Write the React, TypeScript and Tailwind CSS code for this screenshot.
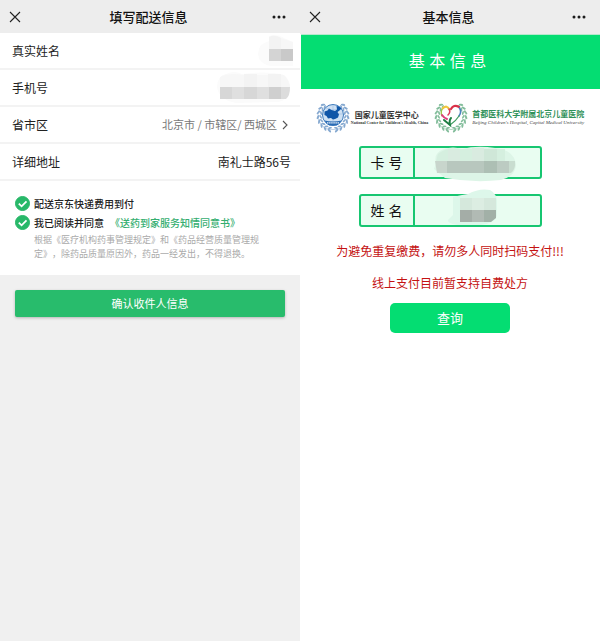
import type { ReactNode } from 'react';

const CJK = "font-['Noto_Sans_CJK_SC',sans-serif]";

function CloseIcon() {
  return (
    <svg viewBox="0 0 12 12" className="h-3 w-3" fill="none" stroke="#222" strokeWidth="1.1">
      <path d="M1 1l10 10M11 1L1 11" />
    </svg>
  );
}

function MoreIcon() {
  return (
    <svg viewBox="0 0 14 4" className="h-1 w-3.5" fill="#1c1c1c">
      <circle cx="2" cy="2" r="1.5" />
      <circle cx="7" cy="2" r="1.5" />
      <circle cx="12" cy="2" r="1.5" />
    </svg>
  );
}

function TitleBar({ title, className }: { title: string; className: string }) {
  return (
    <header className={`flex items-center justify-between bg-[#ededed] pr-3.5 pl-[9px] ${className}`}>
      <button type="button" aria-label="关闭" className="block w-4">
        <CloseIcon />
      </button>
      <h1 className="text-[13px] leading-5 font-medium text-[#111]">{title}</h1>
      <button type="button" aria-label="更多" className="block">
        <MoreIcon />
      </button>
    </header>
  );
}

function Row({ label, children }: { label: string; children: ReactNode }) {
  return (
    <div className="flex h-[37px] items-center justify-between border-b-2 border-[#f3f3f3] pr-[9px] pl-3 text-xs text-[#222]">
      <dt>{label}</dt>
      <dd>{children}</dd>
    </div>
  );
}

function NameMosaic() {
  return (
    <svg viewBox="0 0 38 34" className="-mr-1 h-[34px] w-[38px]">
      <path d="M12 2Q20-1 27 4L36 8V32H14Q2 30 1 20Q1 10 12 7Z" fill="#fbfbfb" />
      <path d="M12 3Q18 0 24 4V15H12Z" fill="#f3f3f3" />
      <path d="M24 4L36 8V15H24Z" fill="#f7f7f7" />
      <path d="M12 15h12v12H12z" fill="#d4d4d4" />
      <path d="M24 15h12v12H24z" fill="#c9c9c9" />
    </svg>
  );
}

function PhoneMosaic() {
  return (
    <svg viewBox="0 0 75 34" className="h-[34px] w-[75px]">
      <path d="M10 3Q18-1 26 3Q48 0 66 3Q75 8 74 19Q73 29 62 31L20 32Q3 29 1 16Q1 5 10 3Z" fill="#fbfbfb" />
      <path d="M4 6Q12 1 28 4H68Q73 9 74 16H4Z" fill="#f7f7f7" />
      <path d="M28 3h13v13H28zM52 3h13v13H52z" fill="#f3f3f3" />
      <path d="M4 16h12v12H4zM28 16h13v12H28z" fill="#d7d7d7" />
      <path d="M16 16h12v12H16zM41 16h12v12H41z" fill="#dfdfdf" />
      <path d="M53 16h12v12H53z" fill="#cfcfcf" />
      <path d="M65 16h9q0 9-4 12h-5z" fill="#dcdcdc" />
    </svg>
  );
}

function CheckItem({ label, children }: { label: string; children?: ReactNode }) {
  return (
    <div className="flex h-[19px] items-center gap-1.5 text-[#222]">
      <label className="flex items-center gap-1">
        <span className="relative block h-[15px] w-[15px]">
          <input
            type="checkbox"
            defaultChecked
            className="peer block h-[15px] w-[15px] appearance-none rounded-full border border-[#28b869] checked:bg-[#28b869]"
          />
          <svg
            viewBox="0 0 15 15"
            className="pointer-events-none absolute inset-0 hidden peer-checked:block"
            fill="none"
            stroke="#fff"
            strokeWidth="1.8"
          >
            <path d="M3.8 7.6l2.8 2.7 4.9-4.9" />
          </svg>
        </span>
        {label}
      </label>
      {children}
    </div>
  );
}

function DeliveryPanel() {
  return (
    <section className="flex flex-col bg-[#f0f0f0]">
      <TitleBar title="填写配送信息" className="h-[33px]" />
      <div className="bg-white pb-[14px]">
        <dl>
          <Row label="真实姓名">
            <NameMosaic />
          </Row>
          <Row label="手机号">
            <PhoneMosaic />
          </Row>
          <Row label="省市区">
            <button type="button" className="flex items-center gap-1 text-[11px] text-[#777]">
              北京市 / 市辖区/ 西城区
              <svg viewBox="0 0 8 10" className="mr-0.5 h-2.5 w-2" fill="none" stroke="#555" strokeWidth="1.1">
                <path d="M2 1l4 4-4 4" />
              </svg>
            </button>
          </Row>
          <Row label="详细地址">南礼士路56号</Row>
        </dl>
        <div className="px-[15px] pt-[13px] text-[10px] font-medium">
          <CheckItem label="配送京东快递费用到付" />
          <CheckItem label="我已阅读并同意">
            <a href="#" className="text-[#35ae70]">
              《送药到家服务知情同意书》
            </a>
          </CheckItem>
          <p className="mt-px pr-5 pl-[19px] text-[9px] leading-[14px] font-normal text-[#aaa] [text-spacing-trim:space-all]">
            根据《医疗机构药事管理规定》和《药品经营质量管理规定》，除药品质量原因外，药品一经发出，不得退换。
          </p>
        </div>
      </div>
      <div className="px-[15px] pt-[15px]">
        <button
          type="button"
          className="block h-[27px] w-full rounded-[2px] bg-[#28bc6c] text-[11px] text-white shadow-[0_1px_3px_rgba(0,0,0,0.25)]"
        >
          确认收件人信息
        </button>
      </div>
    </section>
  );
}

const LEAF_ANGLES = [14, 32, 50, 68, 86, 104, 122, 138];

function Wreath({ color }: { color: string }) {
  return (
    <g fill={color} stroke={color}>
      <path d="M17 28.5A14 14 0 0 1 5 6M17 28.5A14 14 0 0 0 29 6" fill="none" strokeWidth="0.5" />
      {LEAF_ANGLES.map((a) => (
        <g key={a} stroke="none">
          <g transform={`rotate(${a} 17 15)`}>
            <ellipse cx="17" cy="30" rx="2.3" ry="1" transform="rotate(32 17 30)" />
            <ellipse cx="17" cy="27.3" rx="2" ry="0.9" transform="rotate(-28 17 27.3)" />
          </g>
          <g transform={`rotate(${-a} 17 15)`}>
            <ellipse cx="17" cy="30" rx="2.3" ry="1" transform="rotate(-32 17 30)" />
            <ellipse cx="17" cy="27.3" rx="2" ry="0.9" transform="rotate(28 17 27.3)" />
          </g>
        </g>
      ))}
    </g>
  );
}

function CenterLogo() {
  return (
    <svg viewBox="0 0 34 32" className="h-8 w-[34px]">
      <Wreath color="#86a9d0" />
      <circle cx="17" cy="14" r="10.5" fill="#cfe1f3" stroke="#3f7cbd" strokeWidth="1" />
      <path d="M7 13h20M17 4v20M10 7q7 4 14 0" fill="none" stroke="#8db3dc" strokeWidth="0.5" />
      <path
        d="M8.5 10.5l3-1 1.5-2 2.5 1.5 3.5 1 2-1.5-.5-3.5 2.5.5 2.5 2-2 2-2 1.5 1.5 2.5-1 3-3 1.5-2 .5-2-1.5-3 .5-1.5-2.5-2-1z"
        fill="#0f56a8"
      />
      <path d="M8.5 19.5q8.5 2 17 0-2 4-5 5h-7q-3-1-5-5z" fill="#2b6cb5" />
      <path d="M11 21.8h12" stroke="#e6f0fa" strokeWidth="1.2" strokeDasharray="1.5 0.6" />
    </svg>
  );
}

function HospitalLogo() {
  return (
    <svg viewBox="0 0 34 32" className="h-8 w-[34px]" fill="none" strokeLinecap="round">
      <Wreath color="#83bd9b" />
      <path
        d="M16 24Q7 19 7 12Q7 5 12 5Q15 5 17 8Q20 4 24 5Q28 8 26 14Q23 20 16 24Z"
        fill="#fff"
        stroke="none"
      />
      <path d="M8 15Q6 10 9 7" stroke="#9cc64a" strokeWidth="1.4" />
      <path d="M9 7Q13 4 15 8" stroke="#f0c63c" strokeWidth="2.2" />
      <path d="M15 8Q17 11 14 14" stroke="#dc3c5c" strokeWidth="1.5" />
      <path d="M8 14Q10 17 13 18" stroke="#dd3f7c" strokeWidth="2" />
      <path d="M17 8Q20 3 25 6" stroke="#da3148" strokeWidth="2.2" />
      <path d="M25.5 7Q28 11 25 15" stroke="#4d82c0" strokeWidth="1.6" />
      <path d="M25 15Q22 20 16 24" stroke="#3f9e61" strokeWidth="1.2" />
      <path d="M10 19L16 24Q15 19 17 17" stroke="#1e7d43" strokeWidth="2" />
    </svg>
  );
}

function CardMosaic() {
  return (
    <svg viewBox="0 0 84 36" className="absolute -top-0.5 left-[18px] h-9 w-[84px]">
      <path d="M11 3Q20 0 29 3Q44-1 62 2Q82 4 83 20Q81 31 68 34Q40 37 12 32L1 23Q2 20 3 17Q0 7 11 3Z" fill="#ddf5e7" />
      <path d="M5 8Q14 1 26 3H72V15H3Z" fill="#d5efdf" />
      <path d="M15 4h12v11H15zM39 2h12v13H39z" fill="#d9ebe0" />
      <path d="M51 3h13v12H51z" fill="#cfe7d8" />
      <path d="M2 15h12v12H4z" fill="#c8d5cc" />
      <path d="M14 15h37v12H14z" fill="#b8c7be" />
      <path d="M51 15h13v12H51z" fill="#adbfb4" />
      <path d="M64 15h12v12H64z" fill="#bccbc2" />
      <path d="M76 15h6q1 8-4 12h-2z" fill="#c9ddd0" />
    </svg>
  );
}

function PatientMosaic() {
  return (
    <svg viewBox="0 0 52 40" className="absolute -top-2 left-8 h-10 w-[52px]">
      <path d="M6 9Q14 7 21 6Q32 0 43 2Q51 6 50 17V28Q46 36 34 37H10Q0 35 1 32L6 27Z" fill="#ddf7ea" />
      <path d="M13 10h12v12H13zM37 10h12v12H37z" fill="#d5e8dc" />
      <path d="M25 10h12v12H25z" fill="#dcede2" />
      <path d="M13 22h24v12H13z" fill="#a4ada7" />
      <path d="M25 22h12v12H25z" fill="#b1bab4" />
      <path d="M37 22h12v8l-5 4h-7z" fill="#a2b0a7" />
    </svg>
  );
}

function Field({ id, label, children }: { id: string; label: string; children: ReactNode }) {
  return (
    <div className="flex h-[33px] w-[183px] rounded-[3px] border-2 border-[#17c671] bg-[#e9fdf1]">
      <label
        htmlFor={id}
        className="flex w-[54px] shrink-0 items-center justify-center border-r-2 border-[#17c671] font-['Liberation_Sans','Noto_Sans_CJK_SC',sans-serif] text-sm text-[#111]"
      >
        {label}
      </label>
      <div className="relative min-w-0 flex-1">
        <input id={id} type="text" className="block h-full w-full px-2 text-sm outline-none" />
        {children}
      </div>
    </div>
  );
}

function QueryPanel() {
  return (
    <section className="bg-white">
      <TitleBar title="基本信息" className="h-[34px]" />
      <h2 className="ml-px flex h-[55px] items-center justify-center border-t border-[#b5e8cd] bg-[#04dd72] pr-1.5 font-['Liberation_Sans','Noto_Sans_CJK_SC',sans-serif] text-base text-white">
        基 本 信 息
      </h2>
      <div className="flex h-14 items-center justify-center gap-1.5">
        <div className="flex items-center gap-px">
          <CenterLogo />
          <div className="whitespace-nowrap text-[#333]">
            <p className="pl-1 text-[8px] leading-[10px] font-bold">国家儿童医学中心</p>
            <p className="font-['Liberation_Serif',serif] text-[4px] leading-[5px] font-bold">
              National Center for Children's Health, China
            </p>
          </div>
        </div>
        <div className="flex items-center gap-1">
          <HospitalLogo />
          <div className="whitespace-nowrap">
            <p className="text-[8px] leading-[11px] font-bold text-[#2f9158]">首都医科大学附属北京儿童医院</p>
            <p className="font-['Liberation_Serif',serif] text-[5px] leading-[7px] text-[#444] italic">
              Beijing Children's Hospital, Capital Medical University
            </p>
          </div>
        </div>
      </div>
      <form className="flex flex-col items-center pt-px">
        <div className="flex flex-col gap-[15px]">
          <Field id="card" label="卡 号">
            <CardMosaic />
          </Field>
          <Field id="patient" label="姓 名">
            <PatientMosaic />
          </Field>
        </div>
        <p className="mt-4 text-xs leading-4 text-[#c41212]">为避免重复缴费，请勿多人同时扫码支付!!!</p>
        <p className="mt-4 text-xs leading-4 text-[#c41212]">线上支付目前暂支持自费处方</p>
        <button type="button" className="mt-3 h-[30px] w-[120px] rounded-[5px] bg-[#04dd72] text-[13px] text-white">
          查询
        </button>
      </form>
    </section>
  );
}

export default function App() {
  return (
    <main className={`grid min-h-screen grid-cols-2 bg-white pb-px ${CJK}`}>
      <DeliveryPanel />
      <QueryPanel />
    </main>
  );
}
